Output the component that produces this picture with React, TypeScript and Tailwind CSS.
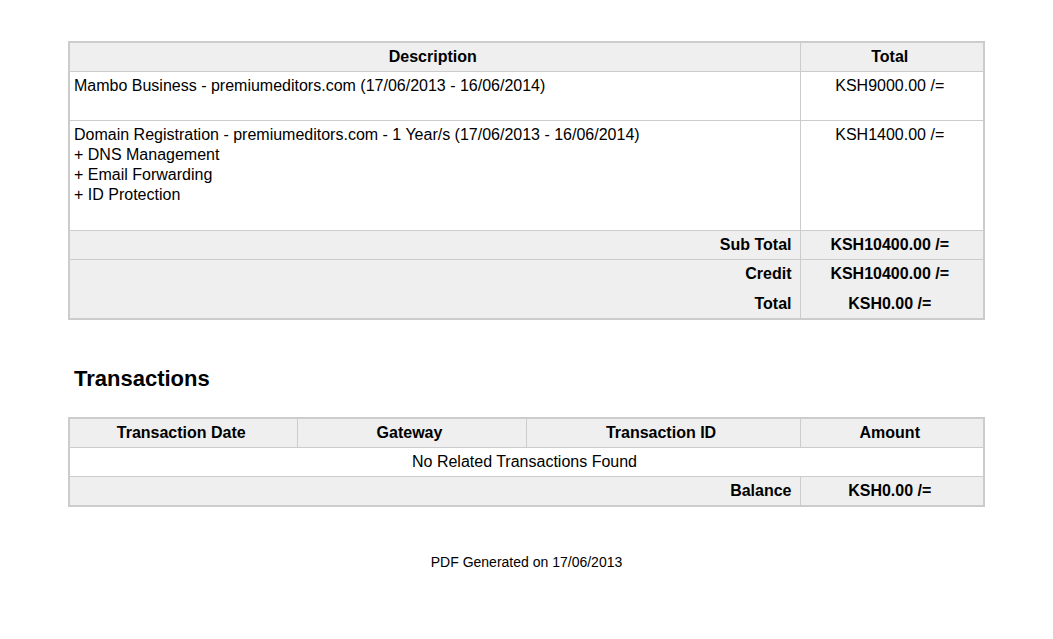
const cell = "border border-[#ccc] pl-[4px] pr-[8px] py-[4px] align-top"

export default function App() {
  return (
    <div className="min-h-screen bg-white text-black font-['Liberation_Sans',Arial,sans-serif] text-[16px] leading-[20px] pt-[41px]">
      <div className="w-[917px] mx-auto">
        <table className="w-full table-fixed border-collapse border-2 border-[#ccc]">
          <colgroup>
            <col />
            <col className="w-[184px]" />
          </colgroup>
          <thead>
            <tr className="bg-[#efefef] font-bold">
              <td className={cell + " text-center"}>Description</td>
              <td className={cell + " text-center"}>Total</td>
            </tr>
          </thead>
          <tbody>
            <tr>
              <td className={cell + " pb-[24px]"}>
                Mambo Business - premiumeditors.com (17/06/2013 - 16/06/2014)
              </td>
              <td className={cell + " text-center"}>KSH9000.00 /=</td>
            </tr>
            <tr>
              <td className={cell + " pb-[25px]"}>
                Domain Registration - premiumeditors.com - 1 Year/s (17/06/2013 - 16/06/2014)
                <br />+ DNS Management
                <br />+ Email Forwarding
                <br />+ ID Protection
              </td>
              <td className={cell + " text-center"}>KSH1400.00 /=</td>
            </tr>
            <tr className="bg-[#efefef] font-bold">
              <td className={cell + " text-right"}>Sub Total</td>
              <td className={cell + " text-center"}>KSH10400.00 /=</td>
            </tr>
            <tr className="bg-[#efefef] font-bold">
              <td className={cell + " text-right border-b-0"}>Credit</td>
              <td className={cell + " text-center border-b-0"}>KSH10400.00 /=</td>
            </tr>
            <tr className="bg-[#efefef] font-bold">
              <td className={cell + " text-right border-t-0 pt-[6px]"}>Total</td>
              <td className={cell + " text-center border-t-0 pt-[6px]"}>KSH0.00 /=</td>
            </tr>
          </tbody>
        </table>

        <h2 className="mt-[46px] ml-[6px] text-[22px] leading-[26px] font-bold">Transactions</h2>

        <table className="w-full table-fixed border-collapse border-2 border-[#ccc] mt-[25px]">
          <colgroup>
            <col className="w-[228px]" />
            <col className="w-[229px]" />
            <col className="w-[274px]" />
            <col />
          </colgroup>
          <thead>
            <tr className="bg-[#efefef] font-bold">
              <td className={cell + " text-center"}>Transaction Date</td>
              <td className={cell + " text-center"}>Gateway</td>
              <td className={cell + " text-center"}>Transaction ID</td>
              <td className={cell + " text-center"}>Amount</td>
            </tr>
          </thead>
          <tbody>
            <tr>
              <td colSpan={4} className={cell + " text-center"}>No Related Transactions Found</td>
            </tr>
            <tr className="bg-[#efefef] font-bold">
              <td colSpan={3} className={cell + " text-right"}>Balance</td>
              <td className={cell + " text-center"}>KSH0.00 /=</td>
            </tr>
          </tbody>
        </table>

        <p className="mt-[46px] text-center text-[14px] leading-[18px]">PDF Generated on 17/06/2013</p>
      </div>
    </div>
  )
}
